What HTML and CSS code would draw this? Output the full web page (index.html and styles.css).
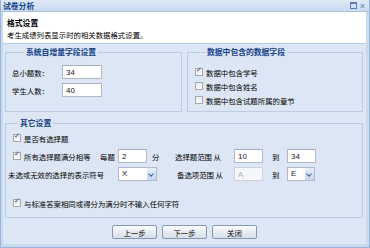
FILE: index.html
```html
<!DOCTYPE html>
<html lang="zh">
<head>
  <meta charset="UTF-8">
  <title>试卷分析</title>
  <link rel="stylesheet" href="styles.css">
</head>
<body>
  <div class="window">
    <div class="titlebar">
      <span class="title">试卷分析</span>
      <span class="tools"><span class="tool-max"></span><span class="tool-close">×</span></span>
    </div>
    <div class="header">
      <div class="header-title">格式设置</div>
      <div class="header-desc">考生成绩列表显示时的相关数据格式设置。</div>
    </div>
    <div class="body">
      <div class="top-row">
        <fieldset class="box box-left">
          <legend>系统自增量字段设置</legend>
          <div class="field first"><label>总小题数：</label><input class="txt" value="34"></div>
          <div class="field"><label>学生人数：</label><input class="txt" value="40"></div>
        </fieldset>
        <fieldset class="box box-right">
          <legend>数据中包含的数据字段</legend>
          <div class="check first"><span class="cb on"></span>数据中包含学号</div>
          <div class="check"><span class="cb"></span>数据中包含姓名</div>
          <div class="check"><span class="cb"></span>数据中包含试题所属的章节</div>
        </fieldset>
      </div>
      <fieldset class="box box-other">
        <legend>其它设置</legend>
        <div class="check row"><span class="cb on"></span>是否有选择题</div>
        <div class="grid">
          <div class="check"><span class="cb on"></span>所有选择题满分相等</div>
          <span class="lbl">每题</span>
          <input class="txt small" value="2">
          <span class="lbl unit">分</span>
          <span class="lbl">选择题范围 从</span>
          <input class="txt small" value="10">
          <span class="lbl to">到</span>
          <input class="txt small" value="34">

          <span class="lbl plain">未选或无效的选择的表示符号</span>
          <span class="combo wide"><span class="combo-val">X</span><span class="arrow"></span></span>
          <span class="lbl range">备选项范围 从</span>
          <input class="txt small dis" value="A" disabled>
          <span class="lbl to">到</span>
          <span class="combo"><span class="combo-val">E</span><span class="arrow"></span></span>
        </div>
        <div class="check last"><span class="cb on"></span>与标准答案相同或得分为满分时不输入任何字符</div>
      </fieldset>
      <div class="buttons">
        <button>上一步</button>
        <button>下一步</button>
        <button>关闭</button>
      </div>
    </div>
  </div>
</body>
</html>
```
FILE: styles.css
```css
body {
  margin: 0;
  font-family: "Noto Sans CJK SC", "Liberation Sans", sans-serif;
  font-size: 7.4px;
  color: #000;
}

.window {
  width: 370px;
  height: 248px;
  box-sizing: border-box;
  background: #c9d9ee;
  border: 1px solid #9ab5da;
  border-top: none;
  padding: 0 3px 3px 2px;
  display: flex;
  flex-direction: column;
}

.titlebar {
  height: 11px;
  flex: none;
  display: flex;
  align-items: center;
  justify-content: space-between;
  padding: 0 4px 0 2px;
  margin: 0 -3px 0 -2px;
  background: linear-gradient(#dfe9f6, #c9daef);
  border-bottom: 1px solid #a8c0e2;
}

.title {
  font-weight: bold;
  color: #15428b;
  font-size: 7.8px;
}

.tools {
  display: flex;
  gap: 3px;
  align-items: center;
}

.tool-max {
  width: 5px;
  height: 4px;
  border: 1px solid #5f7fae;
  border-top-width: 2px;
}

.tool-close {
  color: #5f7fae;
  font: 9px/8px "Liberation Sans", sans-serif;
}

.header {
  flex: none;
  background: #fff;
  height: 32px;
  padding: 5px 4px 0;
  box-sizing: border-box;
  border-bottom: 1px solid #b7cbe6;
}

.header-title {
  font-weight: bold;
  font-size: 7.8px;
  line-height: 12px;
}

.header-desc {
  line-height: 12px;
}

.body {
  flex: 1;
  background: #dce6f4;
  padding: 3px 2px 0 2px;
  display: flex;
  flex-direction: column;
}

.top-row {
  display: flex;
  gap: 5px;
}

.box {
  margin: 0;
  border: 1px solid #bccde3;
  min-width: 0;
  box-sizing: border-box;
}

.box legend {
  color: #15428b;
  font-weight: bold;
  font-size: 7.8px;
  padding: 0 2px;
  line-height: 10px;
}

.box-left {
  width: 177px;
  height: 65px;
  padding: 0 6px;
}

.box-left legend {
  margin-left: 12px;
}

.box-right {
  width: 176px;
  height: 65px;
  padding: 0 7px;
}

.box-right legend {
  margin-left: 10px;
}

.field {
  display: flex;
  align-items: center;
  height: 18px;
}

.field.first {
  margin-top: 6px;
}

.field label {
  width: 50px;
}

.txt {
  width: 40px;
  height: 14px;
  box-sizing: border-box;
  border: 1px solid #b5b8c8;
  border-top-color: #a9adbd;
  background: #fff;
  font: 8px "Liberation Sans", sans-serif;
  color: #222;
  padding: 1px 3px 0;
  margin: 0;
}

.check {
  display: flex;
  align-items: center;
  height: 14px;
  gap: 3px;
  white-space: nowrap;
}

.box-right .check.first {
  margin-top: 8px;
}

.cb {
  width: 6px;
  height: 6px;
  flex: none;
  border: 1px solid #a4a8b0;
  background: linear-gradient(#e9ebee, #fbfbfb);
  position: relative;
}

.cb.on::after {
  content: "✓";
  position: absolute;
  left: 0;
  top: -3px;
  font: 7px "DejaVu Sans", sans-serif;
  color: #3a4a60;
}

.box-other {
  margin-top: 6px;
  height: 100px;
  width: 358px;
  padding: 0 7px;
}

.box-other legend {
  margin-left: 5px;
}

.check.row {
  height: 18px;
  margin-top: 1px;
}

.grid {
  display: grid;
  grid-template-columns: 87px 18px 30px 27px 59px 29px 24px 28px;
  grid-auto-rows: 18px;
  align-items: center;
}

.grid .check {
  height: 18px;
}

.lbl {
  white-space: nowrap;
}

.lbl.unit {
  padding-left: 4px;
}

.lbl.to {
  padding-left: 9px;
}

.lbl.plain {
  grid-column: 1 / span 2;
  margin-left: -5px;
}

.lbl.range {
  padding-left: 2px;
}

.txt.small {
  width: 29px;
}

.combo {
  display: flex;
  width: 28px;
  height: 14px;
  box-sizing: border-box;
  border: 1px solid #b5b8c8;
  background: #fff;
}

.combo.wide {
  width: 39px;
  grid-column: 3 / span 2;
}

.combo-val {
  flex: 1;
  padding-left: 3px;
  font: 8px/12px "Liberation Sans", sans-serif;
  color: #222;
}

.arrow {
  width: 9px;
  background: linear-gradient(#e6eef9, #c3d6ee);
  position: relative;
}

.arrow::after {
  content: "";
  position: absolute;
  left: 2px;
  top: 4px;
  width: 3px;
  height: 3px;
  border-right: 1px solid #3f5f8f;
  border-bottom: 1px solid #3f5f8f;
  transform: rotate(45deg);
}

.dis {
  background: #f4f6fa;
  color: #b0b4bc;
  border-color: #cdd2dc;
}

.check.last {
  margin-top: 13px;
}

.buttons {
  display: flex;
  justify-content: center;
  gap: 5px;
  margin-top: 7px;
}

button {
  width: 45px;
  height: 14px;
  font: 7.4px "Noto Sans CJK SC", sans-serif;
  color: #000;
  border: 1px solid #8797ad;
  border-radius: 2px;
  background: linear-gradient(#fbfcfe, #e4e9f0 60%, #d8dfe8);
  padding: 0;
}
```
